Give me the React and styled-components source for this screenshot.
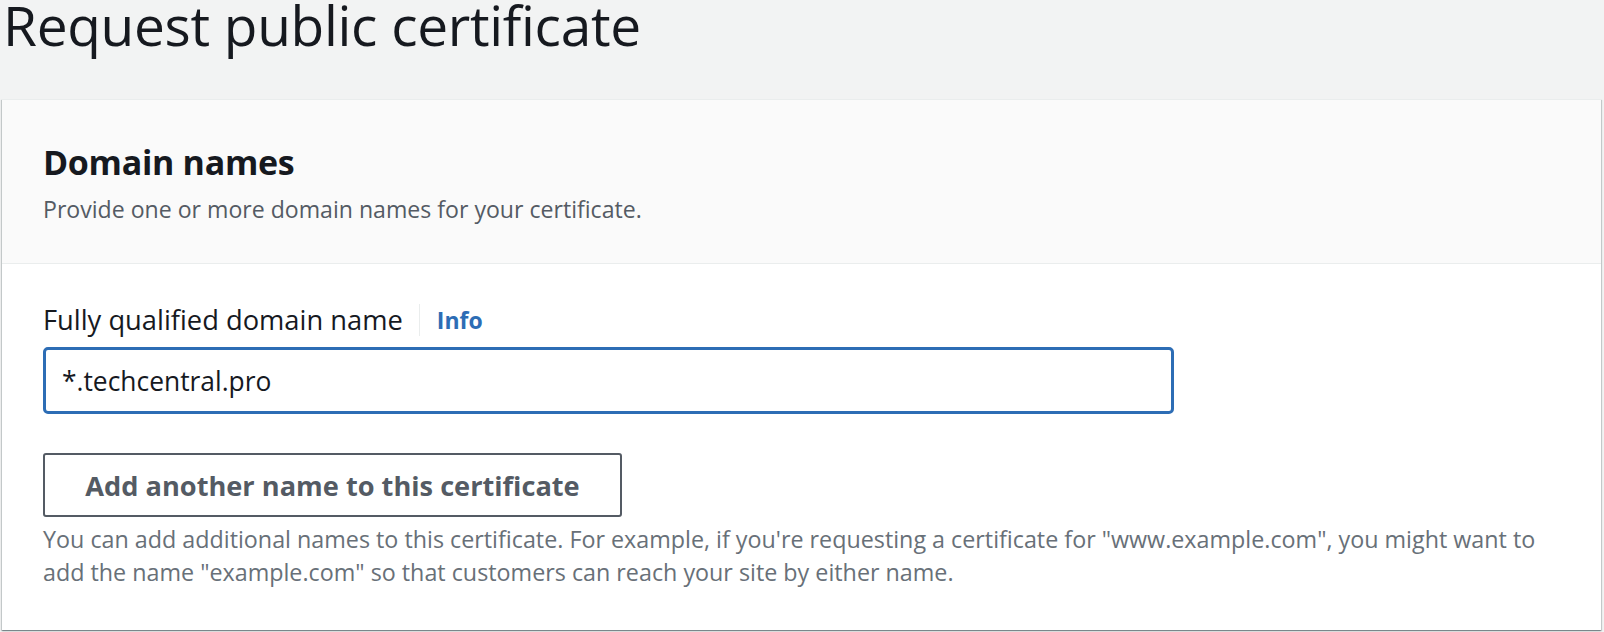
import React from "react";
import styled, { createGlobalStyle } from "styled-components";

const FONT = `"Open Sans", "Noto Sans", Arial, sans-serif`;

const Global = createGlobalStyle`
  html, body { margin: 0; padding: 0; background: #f2f3f3; }
  body { font-family: ${FONT}; color: #16191f; }
  * { box-sizing: border-box; }
`;

const Page = styled.div`
  width: 1604px;
  height: 632px;
  overflow: hidden;
  background: #f2f3f3;
`;

const PageHeader = styled.header`
  height: 99px;
  padding-left: 3px;
`;

const Title = styled.h1`
  margin: 0;
  font-size: 55px;
  font-weight: 400;
  line-height: 50px;
  color: #16191f;
  letter-spacing: -0.3px;
`;

const Card = styled.section`
  margin-left: 2px;
  width: 1599px;
  background: #fff;
  box-shadow: 0 1px 1px 0 rgba(0, 28, 36, 0.3), 1px 1px 1px 0 rgba(0, 28, 36, 0.15),
    -1px 1px 1px 0 rgba(0, 28, 36, 0.15);
  border-top: 1px solid #eaeded;
`;

const CardHeader = styled.div`
  background: #fafafa;
  border-bottom: 1px solid #eaeded;
  padding: 40px 41px 39px;
`;

const CardTitle = styled.h2`
  margin: 0;
  font-size: 34px;
  font-weight: 700;
  line-height: 44px;
  color: #16191f;
  letter-spacing: -0.3px;
`;

const CardDescription = styled.p`
  margin: 10px 0 0;
  font-size: 23.1px;
  line-height: 30px;
  color: #545b64;
`;

const CardBody = styled.div`
  padding: 40px 41px 41px;
`;

const LabelRow = styled.div`
  display: flex;
  align-items: center;
  height: 32px;
`;

const Label = styled.label`
  font-size: 27.3px;
  line-height: 32px;
  color: #16191f;
  padding-right: 16px;
  border-right: 1px solid #eaeded;
`;

const InfoLink = styled.a`
  font-size: 23px;
  font-weight: 700;
  color: #2d6db5;
  text-decoration: none;
  margin-left: 17px;
`;

const TextInput = styled.input`
  display: block;
  margin-top: 11px;
  width: 1131px;
  height: 67px;
  border: 3px solid #2d6db5;
  border-radius: 5px;
  padding: 0 16px;
  font-family: ${FONT};
  font-size: 26.4px;
  color: #16191f;
  background: #fff;
  outline: none;
`;

const SecondaryButton = styled.button`
  display: block;
  margin-top: 39px;
  height: 64px;
  width: 579px;
  border: 2px solid #545b64;
  border-radius: 3px;
  background: #fff;
  font-family: ${FONT};
  font-size: 27.2px;
  font-weight: 700;
  color: #545b64;
  cursor: pointer;
  padding: 0;
`;

const HelpText = styled.p`
  margin: 6px 0 0;
  font-size: 23.3px;
  line-height: 33px;
  color: #687078;
  max-width: 1510px;
`;

export default function App() {
  return (
    <>
      <Global />
      <Page>
        <PageHeader>
          <Title>Request public certificate</Title>
        </PageHeader>
        <Card>
          <CardHeader>
            <CardTitle>Domain names</CardTitle>
            <CardDescription>Provide one or more domain names for your certificate.</CardDescription>
          </CardHeader>
          <CardBody>
            <LabelRow>
              <Label htmlFor="fqdn">Fully qualified domain name</Label>
              <InfoLink href="#">Info</InfoLink>
            </LabelRow>
            <TextInput id="fqdn" defaultValue="*.techcentral.pro" />
            <SecondaryButton type="button">Add another name to this certificate</SecondaryButton>
            <HelpText>
              You can add additional names to this certificate. For example, if you're requesting a
              certificate for "www.example.com", you might want to add the name "example.com" so that
              customers can reach your site by either name.
            </HelpText>
          </CardBody>
        </Card>
      </Page>
    </>
  );
}
